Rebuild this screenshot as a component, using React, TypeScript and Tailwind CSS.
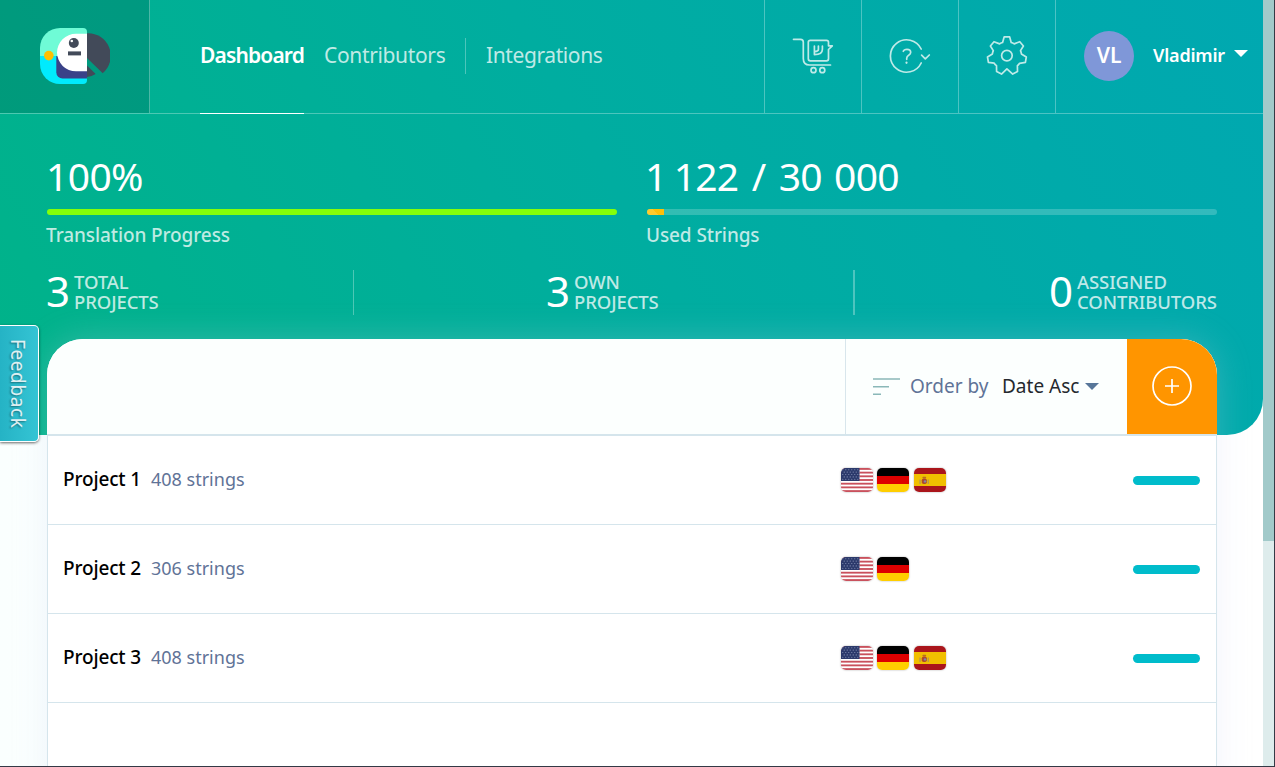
import type { ReactNode } from "react";

const projects = [
  { name: "Project 1", strings: "408 strings", flags: ["us", "de", "es"] },
  { name: "Project 2", strings: "306 strings", flags: ["us", "de"] },
  { name: "Project 3", strings: "408 strings", flags: ["us", "de", "es"] },
];

function Logo() {
  return (
    <svg width="70" height="56" viewBox="40 28 70 56">
      <path d="M40 56V48a20 20 0 0 1 20-20H83a4 4 0 0 1 4 4V56Z" fill="#6ffbd6" />
      <path d="M40 56V64a20 20 0 0 0 20 20H83a4 4 0 0 0 4-4V56Z" fill="#00ebfd" />
      <path d="M56.3 56H87V78.5H62.5a6.2 6.2 0 0 1-6.2-6.2Z" fill="#3a4288" />
      <path d="M87 33.7H76A19 19 0 0 0 57 52.7A19 19 0 0 0 76 71.3H87Z" fill="#fff" />
      <circle cx="73.8" cy="43" r="5" fill="#424a59" />
      <circle cx="71.8" cy="41" r="1.3" fill="#fff" />
      <path d="M68 51.4H81V55.4H68Z" fill="#424a59" />
      <path d="M87 33.3A22.6 22.6 0 0 1 102.7 73.2L87 58Z" fill="#424a59" />
      <path d="M87 65.5L95.7 74A19 19 0 0 1 87 77Z" fill="#424a59" />
      <circle cx="48.8" cy="55.6" r="4.8" fill="#ffbf00" />
    </svg>
  );
}

function CartIcon() {
  return (
    <svg width="42" height="38" viewBox="792 37 42 38" fill="none" stroke="#bfeae8" strokeWidth="1.7" strokeLinecap="round" strokeLinejoin="round">
      <path d="M793.5 39.3H800.5Q803.3 39.3 803.3 42V58.5Q803.3 65 809.5 65H830.5" />
      <path d="M810.3 40.3H826.5Q828.5 40.3 828.5 42.3V45.8H832.3L828.5 49.5V58.8Q828.5 60.8 826.5 60.8H810.3Q808.3 60.8 808.3 58.8V42.3Q808.3 40.3 810.3 40.3Z" />
      <path d="M814.4 46V54.3M818.4 46V49.5Q818.4 51.4 814.6 51.6M822.4 46V49.2Q822.4 54.6 814.4 54.6" />
      <circle cx="813.5" cy="70.2" r="2.5" />
      <circle cx="822.3" cy="70.2" r="2.5" />
    </svg>
  );
}

function HelpIcon() {
  return (
    <svg width="42" height="36" viewBox="889 38 42 36" fill="none" stroke="#bfeae8" strokeWidth="1.7" strokeLinecap="round" strokeLinejoin="round">
      <path d="M921.2 49A16.2 16.2 0 1 0 921.2 63" />
      <path d="M921.6 55.2L925.3 58.8L929.3 55" />
      <path d="M903.3 51.3Q904 49.3 907 49.3Q910.7 49.3 910.7 52.3Q910.7 54 908.7 55.2Q906.7 56.4 906.7 58.4V59.3" />
      <path d="M906.5 62.6V62.8" strokeWidth="2.2" />
    </svg>
  );
}

function GearIcon() {
  return (
    <svg width="42" height="42" viewBox="986 35 42 42" fill="none" stroke="#bfeae8" strokeWidth="1.7" strokeLinejoin="round">
      <path d="M1004.2 36.8H1009.6L1011.2 42.5Q1012.8 42.9 1014.2 43.9L1019.8 41.7L1023.4 46L1020.5 50.6Q1021.2 52.3 1021.4 54L1026.3 57L1025.4 62.4L1019.6 63.3Q1018.6 64.8 1017.4 65.7L1017.5 71.6L1012.7 74.1L1006.9 68.8L1001.5 74.1L996.6 71.6L996.5 65.7Q995.1 64.6 994.2 63.2L988.4 62.4L987.5 57L992.4 54Q992.6 52.3 993.3 50.6L990.4 46L994 41.7L999.6 43.9Q1001 42.9 1002.6 42.5Z" />
      <circle cx="1006.9" cy="55.6" r="5.3" />
    </svg>
  );
}

function HeaderCell({ children }: { children: ReactNode }) {
  return <div className="flex h-full w-[97px] shrink-0 items-center justify-center border-l border-white/30 pb-0.5">{children}</div>;
}

function Flag({ code }: { code: string }) {
  return (
    <svg width="32" height="24" viewBox="0 0 32 24" className="shrink-0 rounded-[5px] shadow-[0_0_2px_rgba(0,0,0,0.35)]">
      {code === "us" && (
        <>
          <rect width="32" height="24" fill="#fff" />
          {[0, 1, 2, 3, 4, 5, 6].map((i) => (
            <rect key={i} y={i * 3.69} width="32" height="1.85" fill="#c9505c" />
          ))}
          <rect width="18.5" height="13" fill="#2c3a6c" />
          {[0, 1, 2, 3, 4].map((r) =>
            [0, 1, 2, 3, 4, 5].map((c) => (
              <circle key={`${r}-${c}`} cx={1.8 + c * 3 + (r % 2) * 1.4} cy={1.7 + r * 2.4} r="0.55" fill="#8f9abc" />
            )),
          )}
        </>
      )}
      {code === "de" && (
        <>
          <rect width="32" height="8" fill="#000" />
          <rect y="8" width="32" height="8" fill="#dd0000" />
          <rect y="16" width="32" height="8" fill="#ffce00" />
        </>
      )}
      {code === "es" && (
        <>
          <rect width="32" height="24" fill="#aa151b" />
          <rect y="6" width="32" height="12" fill="#f1bf00" />
          <rect x="7.8" y="10.5" width="5" height="5.6" rx="1.8" fill="#ad4a2e" />
          <path d="M6 11.5V16M14.3 11.5V16" stroke="#b3935a" strokeWidth="1.2" />
          <rect x="8.4" y="8.8" width="3.8" height="1.6" rx="0.8" fill="#bb6b22" />
          <circle cx="11" cy="13.4" r="1.2" fill="#8286a8" />
        </>
      )}
    </svg>
  );
}

function Stat({ value, top, bottom }: { value: string; top: string; bottom: string }) {
  return (
    <div className="flex h-[45px] items-center">
      <span className="w-[28px] pb-1 text-[42px] leading-[41px] font-[450] tracking-[-1px] text-white">{value}</span>
      <div className="pb-px text-[18.5px] leading-5 font-medium tracking-[-0.1px] whitespace-nowrap text-white/75">
        <div>{top}</div>
        <div>{bottom}</div>
      </div>
    </div>
  );
}

export default function App() {
  return (
    <div className="flex h-[767px] w-[1275px] flex-col overflow-hidden border-r border-b border-[#343a46] bg-white font-['Noto_Sans','Open_Sans',sans-serif]">
      <div className="flex min-h-0 flex-1">
        <div className="relative w-[1263px] shrink-0 overflow-hidden bg-linear-to-r from-[#fafffe] to-white to-30%">
          <div className="h-[435px] rounded-br-[36px] bg-[linear-gradient(60deg,#00b388_0%,#00ada0_50%,#00a8b1_100%)]">
            <header className="flex h-[114px] items-center border-b border-white/30">
              <div className="flex h-full w-[150px] shrink-0 items-center justify-center border-r border-white/30 bg-black/13 pb-px">
                <Logo />
              </div>
              <nav className="flex h-full flex-1 items-center pl-[50px] text-[21px] whitespace-nowrap text-white/75">
                <a className="-mb-px flex h-[114px] w-[104px] items-center border-b border-white pb-0.5 font-semibold tracking-[-0.85px] text-white">Dashboard</a>
                <a className="ml-5 w-[122px] pb-0.5 tracking-[-0.35px]">Contributors</a>
                <span className="mr-5 mb-0.5 ml-[19px] h-9 w-px bg-white/30" />
                <a className="pb-0.5 tracking-[-0.4px]">Integrations</a>
              </nav>
              <HeaderCell><CartIcon /></HeaderCell>
              <HeaderCell><HelpIcon /></HeaderCell>
              <HeaderCell><GearIcon /></HeaderCell>
              <div className="flex h-full w-[208px] shrink-0 items-center border-l border-white/30 pb-0.5 pl-7 font-semibold text-white">
                <span className="flex size-[50px] items-center justify-center rounded-full bg-[#7f97d8] text-[21px]">VL</span>
                <span className="ml-[19px] w-[72px] text-[18px] tracking-[-0.2px] whitespace-nowrap">Vladimir</span>
                <svg width="14" height="7" viewBox="0 0 14 7" className="mb-1 ml-[9px]"><path d="M0 0H14L7 7Z" fill="#fff" /></svg>
              </div>
            </header>

            <section className="flex gap-[30px] pt-[37px] pl-[47px]">
              <div className="w-[570px] shrink-0">
                <p className="-ml-px text-[39px] leading-[50px] font-[450] tracking-[-0.6px] text-white">100%</p>
                <div className="mt-2 h-1.5 rounded-full bg-[#84ff09]" />
                <p className="mt-2 -ml-px text-[19px] leading-6 font-medium tracking-[-0.1px] text-white/75">Translation Progress</p>
              </div>
              <div className="w-[570px] shrink-0">
                <p className="-ml-0.5 text-[39px] leading-[50px] font-[450] tracking-[-0.8px] whitespace-pre text-white">
                  <span className="[word-spacing:-2px]">1 122</span>
                  <span className="[word-spacing:4px]">{" / "}</span>
                  <span className="[word-spacing:3px]">30 000</span>
                </p>
                <div className="mt-2 h-1.5 overflow-hidden rounded-full bg-white/20">
                  <div className="h-full w-[17px] bg-[linear-gradient(45deg,#ffca2c_50%,#ffbf08_50%)]" />
                </div>
                <p className="mt-2 -ml-px text-[19px] leading-6 font-medium tracking-[-0.1px] text-white/75">Used Strings</p>
              </div>
            </section>

            <section className="mt-[23px] flex h-[45px] px-[46px]">
              <div className="flex w-[308px] border-r border-white/30">
                <Stat value="3" top="TOTAL" bottom="PROJECTS" />
              </div>
              <div className="ml-[192px] flex w-[309px] border-r-2 border-white/30">
                <Stat value="3" top="OWN" bottom="PROJECTS" />
              </div>
              <div className="ml-[194px]">
                <Stat value="0" top="ASSIGNED" bottom="CONTRIBUTORS" />
              </div>
            </section>
          </div>

          <main className="relative -mt-24 mr-[46px] ml-[47px] h-[460px] rounded-t-[36px] bg-white shadow-[0_0_34px_rgba(200,210,240,0.26)]">
            <div className="flex h-[95px] overflow-hidden rounded-t-[36px] bg-[#fcfffe]">
              <div className="flex-1" />
              <div className="flex w-[282px] items-center border-l border-[#d8e6ec] pl-[27px] text-[19px] whitespace-nowrap">
                <svg width="28" height="18" viewBox="0 0 28 18" stroke="#8ab8b8" strokeWidth="1.5"><path d="M0 1H27M0 8.8H16M0 16.3H8" /></svg>
                <span className="ml-[9px] w-[79px] text-[#5f7397]">Order by</span>
                <span className="ml-[13px] w-[77px] text-[#25292e]">Date Asc</span>
                <svg width="14" height="7" viewBox="0 0 14 7" className="ml-[6px]"><path d="M0 0H14L7 7Z" fill="#577699" /></svg>
              </div>
              <button className="flex w-[90px] items-center justify-center bg-[#ff9500] pb-0.5">
                <svg width="40" height="40" viewBox="0 0 40 40" fill="none" stroke="#fff" strokeWidth="1.7"><circle cx="20" cy="20" r="19" /><path d="M13 20H27M20 13V27" /></svg>
              </button>
            </div>
            <div className="h-[360px] border-x border-t-2 border-[#d5e5ec]">
              {projects.map((p) => (
                <div key={p.name} className="flex h-[89px] items-center border-b border-[#d5e5ec] pr-4 pl-[15px] text-[19px] whitespace-nowrap">
                  <span className="w-[78px] pb-0.5 font-medium tracking-[-0.15px] text-black">{p.name}</span>
                  <span className="ml-[10px] pb-0.5 text-[18px] text-[#5f7397]">{p.strings}</span>
                  <div className="mr-[188px] ml-auto flex w-[104px] gap-[4.4px]">
                    {p.flags.map((f) => <Flag key={f} code={f} />)}
                  </div>
                  <span className="h-[9px] w-[67px] rounded-full bg-[#00bccb]" />
                </div>
              ))}
            </div>
          </main>

          <div className="absolute top-[325px] left-0 flex h-[117px] w-[39px] items-center justify-center rounded-r-[5px] border border-l-0 border-white bg-linear-to-r from-[#25b3c5] to-[#34c4d4] shadow-[0_1px_3px_rgba(0,0,0,0.6)]">
            <span className="mr-0.5 text-[19px] leading-6 tracking-[0.6px] text-white/85 [text-shadow:1px_1px_2px_rgba(0,0,0,0.4)] [writing-mode:vertical-rl]">Feedback</span>
          </div>
        </div>
        <div className="flex-1 bg-[#deecec]">
          <div className="h-[541px] bg-[#a2caca]" />
        </div>
      </div>
    </div>
  );
}
